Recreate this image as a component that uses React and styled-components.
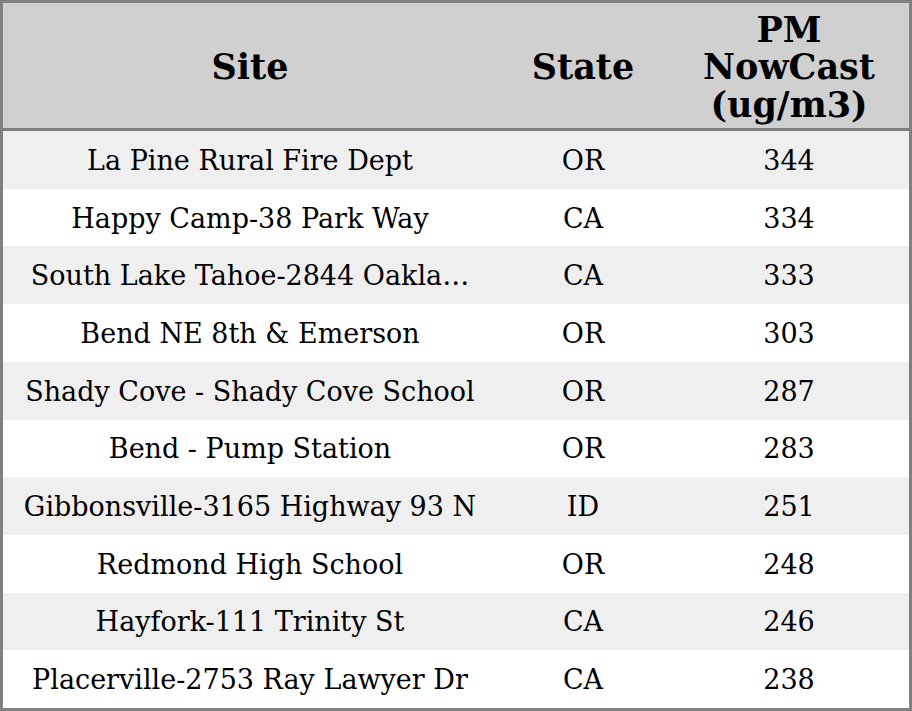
import React from "react";
import styled, { createGlobalStyle } from "styled-components";

const Global = createGlobalStyle`
  html, body { margin: 0; padding: 0; background: #ffffff; }
  * { box-sizing: border-box; }
`;

const Frame = styled.div`
  width: 912px;
  height: 711px;
  border: 3px solid #808080;
  display: grid;
  grid-template-columns: 494px 172px 1fr;
  grid-template-rows: 128px repeat(10, 1fr);
  font-family: "DejaVu Serif", serif;
  color: #000;
`;

const HeadCell = styled.div`
  background: #d0d0d0;
  border-bottom: 3px solid #808080;
  display: flex;
  align-items: center;
  justify-content: center;
  text-align: center;
  font-weight: bold;
  font-size: 35px;
  line-height: 37.5px;
  padding-top: 3px;
`;

const Cell = styled.div`
  background: ${(p) => (p.$alt ? "#efefef" : "#ffffff")};
  display: flex;
  align-items: center;
  justify-content: center;
  font-size: 27px;
  white-space: nowrap;
  overflow: hidden;
  padding-top: 1px;
`;

const rows = [
  ["La Pine Rural Fire Dept", "OR", "344"],
  ["Happy Camp-38 Park Way", "CA", "334"],
  ["South Lake Tahoe-2844 Oakla…", "CA", "333"],
  ["Bend NE 8th & Emerson", "OR", "303"],
  ["Shady Cove - Shady Cove School", "OR", "287"],
  ["Bend - Pump Station", "OR", "283"],
  ["Gibbonsville-3165 Highway 93 N", "ID", "251"],
  ["Redmond High School", "OR", "248"],
  ["Hayfork-111 Trinity St", "CA", "246"],
  ["Placerville-2753 Ray Lawyer Dr", "CA", "238"],
];

export default function App() {
  return (
    <>
      <Global />
      <Frame>
        <HeadCell>Site</HeadCell>
        <HeadCell>State</HeadCell>
        <HeadCell>
          PM
          <br />
          NowCast
          <br />
          (ug/m3)
        </HeadCell>
        {rows.map((r, i) =>
          r.map((v, j) => (
            <Cell key={`${i}-${j}`} $alt={i % 2 === 0}>
              {v}
            </Cell>
          ))
        )}
      </Frame>
    </>
  );
}
